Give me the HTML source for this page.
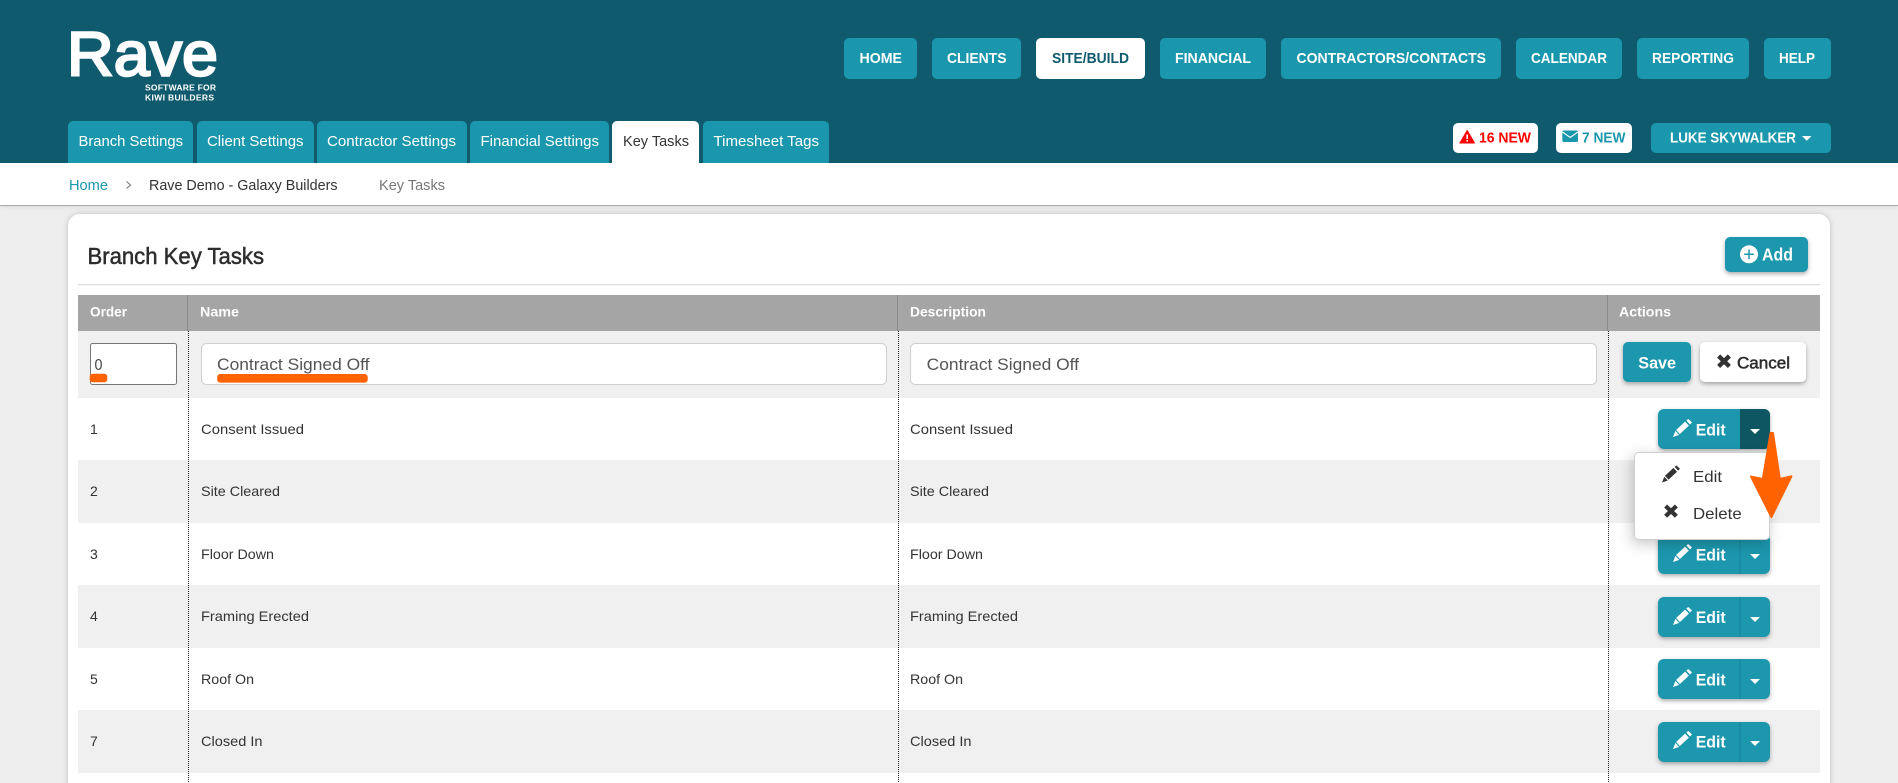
<!DOCTYPE html>
<html lang="en">
<head>
<meta charset="utf-8">
<title>Branch Key Tasks</title>
<style>
html,body{margin:0;padding:0;width:1898px;height:783px;overflow:hidden;background:#eee}
svg{display:block}
text{font-family:"Liberation Sans",sans-serif}
.b{font-weight:700}
.nav{font-size:15px;font-weight:700;fill:#fff}
.tab{font-size:15px;fill:#fff}
.cell{font-size:14px;fill:#333}
.th{font-size:14px;font-weight:700;fill:#fff}
.inp{font-size:17px;fill:#555}
.ed{font-size:17px;font-weight:700;fill:#fff}
.dd{font-size:16px;fill:#333}
</style>
</head>
<body>
<svg width="1898" height="783" viewBox="0 0 1898 783" xmlns="http://www.w3.org/2000/svg">
<defs>
<filter id="sh" x="-20%" y="-30%" width="140%" height="170%"><feDropShadow dx="0" dy="2" stdDeviation="2" flood-color="#000" flood-opacity=".32"/></filter>
<filter id="card" x="-2%" y="-5%" width="104%" height="110%"><feDropShadow dx="0" dy="0" stdDeviation="3" flood-color="#000" flood-opacity=".22"/></filter>
<filter id="menu" x="-30%" y="-30%" width="160%" height="170%"><feDropShadow dx="-2" dy="4" stdDeviation="7" flood-color="#000" flood-opacity=".22"/></filter>
<filter id="bar" x="-1%" y="-20%" width="102%" height="160%"><feDropShadow dx="0" dy="1" stdDeviation="3" flood-color="#000" flood-opacity=".12"/></filter>
<symbol id="pencil" viewBox="0 0 19 18"><path d="M13.3 1.5L15.2 0 19 3.4 17 5.5zM12.1 2.6L15.9 6.6 6.9 15 3.1 11zM2.4 11.9L6.2 15.9 0 18z"/></symbol>
</defs>

<!-- page chrome -->
<rect width="1898" height="783" fill="#eeeeee"/>
<rect y="163" width="1898" height="42" fill="#fff" filter="url(#bar)"/>
<rect y="205" width="1898" height="1" fill="#a9a9a9"/>
<rect width="1898" height="163" fill="#105a6e"/>

<!-- logo -->
<text x="67" y="75.5" font-size="62" fill="#fff" stroke="#fff" stroke-width="2.4" textLength="151" lengthAdjust="spacingAndGlyphs">Rave</text>
<text x="145" y="90.5" font-size="8.5" class="b" fill="#fff" textLength="71" lengthAdjust="spacing">SOFTWARE FOR</text>
<text x="145" y="100.5" font-size="8.5" class="b" fill="#fff" textLength="69" lengthAdjust="spacing">KIWI BUILDERS</text>

<!-- main nav -->
<g fill="#1b97ad">
<rect x="844" y="38" width="73" height="41" rx="5"/>
<rect x="932" y="38" width="89" height="41" rx="5"/>
<rect x="1036" y="38" width="109" height="41" rx="5" fill="#fff"/>
<rect x="1160" y="38" width="106" height="41" rx="5"/>
<rect x="1281" y="38" width="220" height="41" rx="5"/>
<rect x="1516" y="38" width="106" height="41" rx="5"/>
<rect x="1637" y="38" width="112" height="41" rx="5"/>
<rect x="1764" y="38" width="67" height="41" rx="5"/>
</g>
<text class="nav" x="859.5" y="63" textLength="42.5" lengthAdjust="spacingAndGlyphs">HOME</text>
<text class="nav" x="947" y="63" textLength="59.5" lengthAdjust="spacingAndGlyphs">CLIENTS</text>
<text class="nav" x="1052" y="63" textLength="77" lengthAdjust="spacingAndGlyphs" style="fill:#105a6e">SITE/BUILD</text>
<text class="nav" x="1175" y="63" textLength="76" lengthAdjust="spacingAndGlyphs">FINANCIAL</text>
<text class="nav" x="1296.5" y="63" textLength="189.5" lengthAdjust="spacingAndGlyphs">CONTRACTORS/CONTACTS</text>
<text class="nav" x="1531" y="63" textLength="76" lengthAdjust="spacingAndGlyphs">CALENDAR</text>
<text class="nav" x="1652" y="63" textLength="82" lengthAdjust="spacingAndGlyphs">REPORTING</text>
<text class="nav" x="1779" y="63" textLength="36" lengthAdjust="spacingAndGlyphs">HELP</text>

<!-- tabs -->
<g fill="#1b97ad">
<path d="M68 163v-37a5 5 0 0 1 5-5h115a5 5 0 0 1 5 5v37z"/>
<path d="M197 163v-37a5 5 0 0 1 5-5h107a5 5 0 0 1 5 5v37z"/>
<path d="M317 163v-37a5 5 0 0 1 5-5h140a5 5 0 0 1 5 5v37z"/>
<path d="M470 163v-37a5 5 0 0 1 5-5h129a5 5 0 0 1 5 5v37z"/>
<path d="M612 163v-37a5 5 0 0 1 5-5h77a5 5 0 0 1 5 5v37z" fill="#fff"/>
<path d="M703 163v-37a5 5 0 0 1 5-5h116a5 5 0 0 1 5 5v37z"/>
</g>
<text class="tab" x="78.5" y="146" textLength="104.5" lengthAdjust="spacingAndGlyphs">Branch Settings</text>
<text class="tab" x="207" y="146" textLength="96.5" lengthAdjust="spacingAndGlyphs">Client Settings</text>
<text class="tab" x="327" y="146" textLength="129" lengthAdjust="spacingAndGlyphs">Contractor Settings</text>
<text class="tab" x="480.5" y="146" textLength="118.5" lengthAdjust="spacingAndGlyphs">Financial Settings</text>
<text class="tab" x="623" y="146" textLength="66" lengthAdjust="spacingAndGlyphs" style="fill:#333">Key Tasks</text>
<text class="tab" x="713.5" y="146" textLength="105.5" lengthAdjust="spacingAndGlyphs">Timesheet Tags</text>

<!-- badges -->
<rect x="1453" y="123" width="85" height="30" rx="5" fill="#fff"/>
<path d="M1467.2 130.5l7.3 12.5h-14.6z" fill="#f00" stroke="#f00" stroke-width="1" stroke-linejoin="round"/>
<rect x="1466.4" y="134.5" width="1.6" height="4.5" fill="#fff"/><rect x="1466.4" y="140" width="1.6" height="1.6" fill="#fff"/>
<text x="1479" y="142.3" font-size="14.5" class="b" fill="#f00" textLength="52" lengthAdjust="spacingAndGlyphs">16 NEW</text>
<rect x="1556" y="123" width="76" height="30" rx="5" fill="#fff"/>
<rect x="1562.3" y="130.5" width="15.7" height="11.5" rx="1.5" fill="#1b97ad"/>
<path d="M1562.5 132l7.7 5.5 7.7-5.5" fill="none" stroke="#fff" stroke-width="1.1"/>
<text x="1582" y="142.3" font-size="14.5" class="b" fill="#1b97ad" textLength="43.5" lengthAdjust="spacingAndGlyphs">7 NEW</text>
<rect x="1651" y="123" width="180" height="30" rx="5" fill="#1b97ad"/>
<text x="1670" y="142.3" font-size="14.5" class="b" fill="#fff" textLength="126" lengthAdjust="spacingAndGlyphs">LUKE SKYWALKER</text>
<path d="M1802 136h9.5l-4.75 4.8z" fill="#fff"/>

<!-- breadcrumb -->
<text x="69" y="190" font-size="14.5" fill="#1b97ad" textLength="39" lengthAdjust="spacingAndGlyphs">Home</text>
<path d="M126.5 181.5l4 3.5-4 3.5" fill="none" stroke="#777" stroke-width="1.1"/>
<text x="149" y="190" font-size="14.5" fill="#333" textLength="188.5" lengthAdjust="spacingAndGlyphs">Rave Demo - Galaxy Builders</text>
<text x="379" y="190" font-size="14.5" fill="#777" textLength="66" lengthAdjust="spacingAndGlyphs">Key Tasks</text>

<!-- card -->
<path d="M68 800V226a12 12 0 0 1 12-12h1738a12 12 0 0 1 12 12v574z" fill="#fff" filter="url(#card)"/>
<text x="87.5" y="264" font-size="23" fill="#2d2d2d" stroke="#2d2d2d" stroke-width=".5" textLength="176.5" lengthAdjust="spacingAndGlyphs">Branch Key Tasks</text>
<rect x="78" y="284" width="1742" height="1.3" fill="#dedede"/>

<!-- Add -->
<rect x="1725" y="237" width="83" height="35" rx="5" fill="#1b97ad" filter="url(#sh)"/>
<circle cx="1749" cy="254.3" r="9" fill="#fff"/>
<path d="M1749 249.5v9.6M1744.2 254.3h9.6" stroke="#1b97ad" stroke-width="1.5"/>
<text x="1762" y="260.7" font-size="17.5" class="b" fill="#fff" textLength="31" lengthAdjust="spacingAndGlyphs">Add</text>

<!-- table header -->
<rect x="78" y="295" width="1742" height="36" fill="#a5a5a5"/>
<rect x="187" y="295" width="1" height="36" fill="#8b8b8b"/>
<rect x="897" y="295" width="1" height="36" fill="#8b8b8b"/>
<rect x="1607" y="295" width="1" height="36" fill="#8b8b8b"/>
<text class="th" x="90" y="316.5" textLength="37" lengthAdjust="spacingAndGlyphs">Order</text>
<text class="th" x="200" y="316.5" textLength="39" lengthAdjust="spacingAndGlyphs">Name</text>
<text class="th" x="910" y="316.5" textLength="76" lengthAdjust="spacingAndGlyphs">Description</text>
<text class="th" x="1619" y="316.5" textLength="52" lengthAdjust="spacingAndGlyphs">Actions</text>

<!-- rows -->
<g fill="#f0f0f0">
<rect x="78" y="331" width="1742" height="67"/>
<rect x="78" y="460" width="1742" height="63"/>
<rect x="78" y="585" width="1742" height="63"/>
<rect x="78" y="710" width="1742" height="63"/>
</g>
<g stroke="#222" stroke-width="1" stroke-dasharray="1 1" shape-rendering="crispEdges">
<path d="M188.5 331V783M898.5 331V783M1608.5 331V783"/>
</g>

<!-- edit row -->
<rect x="90.5" y="343.5" width="86" height="41" rx="2" fill="#fff" stroke="#767676"/>
<text x="94.5" y="370" font-size="16" fill="#444" textLength="8" lengthAdjust="spacingAndGlyphs">0</text>
<rect x="201.5" y="343.5" width="685" height="41" rx="5" fill="#fff" stroke="#cfcfcf"/>
<text class="inp" x="217" y="370" textLength="152.5" lengthAdjust="spacingAndGlyphs">Contract Signed Off</text>
<rect x="910.5" y="343.5" width="686" height="41" rx="5" fill="#fff" stroke="#cfcfcf"/>
<text class="inp" x="926.7" y="370" textLength="152.3" lengthAdjust="spacingAndGlyphs">Contract Signed Off</text>
<rect x="89.7" y="373.7" width="17.6" height="8.6" rx="3" fill="#ff6200"/>
<rect x="217.2" y="374" width="150.5" height="8.6" rx="3" fill="#ff6200"/>

<rect x="1623" y="342" width="68" height="40" rx="5" fill="#1b97ad" filter="url(#sh)"/>
<text x="1638.3" y="368.3" font-size="17" class="b" fill="#fff" textLength="37.7" lengthAdjust="spacingAndGlyphs">Save</text>
<rect x="1700" y="342" width="106" height="40" rx="5" fill="#fff" filter="url(#sh)"/>
<path d="M1718.6 356l10.8 10.4M1729.4 356l-10.8 10.4" stroke="#333" stroke-width="4.4"/>
<text x="1737" y="368.3" font-size="17" fill="#2d2d2d" stroke="#2d2d2d" stroke-width=".55" textLength="53" lengthAdjust="spacingAndGlyphs">Cancel</text>

<!-- cell text -->
<g class="cell">
<text class="cell" x="90" y="434">1</text>
<text class="cell" x="201" y="434" textLength="103" lengthAdjust="spacingAndGlyphs">Consent Issued</text>
<text class="cell" x="910" y="434" textLength="103" lengthAdjust="spacingAndGlyphs">Consent Issued</text>
<text class="cell" x="90" y="496">2</text>
<text class="cell" x="201" y="496" textLength="79" lengthAdjust="spacingAndGlyphs">Site Cleared</text>
<text class="cell" x="910" y="496" textLength="79" lengthAdjust="spacingAndGlyphs">Site Cleared</text>
<text class="cell" x="90" y="559">3</text>
<text class="cell" x="201" y="559" textLength="73" lengthAdjust="spacingAndGlyphs">Floor Down</text>
<text class="cell" x="910" y="559" textLength="73" lengthAdjust="spacingAndGlyphs">Floor Down</text>
<text class="cell" x="90" y="621">4</text>
<text class="cell" x="201" y="621" textLength="108" lengthAdjust="spacingAndGlyphs">Framing Erected</text>
<text class="cell" x="910" y="621" textLength="108" lengthAdjust="spacingAndGlyphs">Framing Erected</text>
<text class="cell" x="90" y="684">5</text>
<text class="cell" x="201" y="684" textLength="53" lengthAdjust="spacingAndGlyphs">Roof On</text>
<text class="cell" x="910" y="684" textLength="53" lengthAdjust="spacingAndGlyphs">Roof On</text>
<text class="cell" x="90" y="746">7</text>
<text class="cell" x="201" y="746" textLength="61.5" lengthAdjust="spacingAndGlyphs">Closed In</text>
<text class="cell" x="910" y="746" textLength="61.5" lengthAdjust="spacingAndGlyphs">Closed In</text>
</g>

<!-- row buttons -->
<g id="rowbtns">
<!-- row 1 (open) -->
<rect x="1658" y="409" width="112" height="40" rx="6" fill="#1b97ad" filter="url(#sh)"/>
<path d="M1740 409h24a6 6 0 0 1 6 6v28a6 6 0 0 1-6 6h-24z" fill="#0f5663"/>
<use href="#pencil" x="1673" y="419" width="19" height="18" fill="#fff"/>
<text class="ed" x="1695.7" y="435.5" textLength="30" lengthAdjust="spacingAndGlyphs">Edit</text>
<path d="M1750 429h10l-5 5z" fill="#fff"/>

<!-- row 3 -->
<rect x="1658" y="534" width="112" height="40" rx="6" fill="#1b97ad" filter="url(#sh)"/>
<rect x="1739.5" y="534" width="1" height="40" fill="#168598"/>
<use href="#pencil" x="1673" y="544" width="19" height="18" fill="#fff"/>
<text class="ed" x="1695.7" y="560.5" textLength="30" lengthAdjust="spacingAndGlyphs">Edit</text>
<path d="M1750 554h10l-5 5z" fill="#fff"/>

<!-- row 4 -->
<rect x="1658" y="597" width="112" height="40" rx="6" fill="#1b97ad" filter="url(#sh)"/>
<rect x="1739.5" y="597" width="1" height="40" fill="#168598"/>
<use href="#pencil" x="1673" y="607" width="19" height="18" fill="#fff"/>
<text class="ed" x="1695.7" y="623" textLength="30" lengthAdjust="spacingAndGlyphs">Edit</text>
<path d="M1750 617h10l-5 5z" fill="#fff"/>

<!-- row 5 -->
<rect x="1658" y="659" width="112" height="40" rx="6" fill="#1b97ad" filter="url(#sh)"/>
<rect x="1739.5" y="659" width="1" height="40" fill="#168598"/>
<use href="#pencil" x="1673" y="669" width="19" height="18" fill="#fff"/>
<text class="ed" x="1695.7" y="685.5" textLength="30" lengthAdjust="spacingAndGlyphs">Edit</text>
<path d="M1750 679h10l-5 5z" fill="#fff"/>

<!-- row 7 -->
<rect x="1658" y="722" width="112" height="40" rx="6" fill="#1b97ad" filter="url(#sh)"/>
<rect x="1739.5" y="722" width="1" height="40" fill="#168598"/>
<use href="#pencil" x="1673" y="731" width="19" height="18" fill="#fff"/>
<text class="ed" x="1695.7" y="747.7" textLength="30" lengthAdjust="spacingAndGlyphs">Edit</text>
<path d="M1750 741h10l-5 5z" fill="#fff"/>
</g>

<!-- dropdown -->
<rect x="1634.5" y="452.5" width="135" height="87" rx="4" fill="#fff" stroke="#cfcfcf" filter="url(#menu)"/>
<use href="#pencil" x="1662" y="465" width="18" height="18" fill="#333"/>
<text class="dd" x="1693" y="482" textLength="29" lengthAdjust="spacingAndGlyphs">Edit</text>
<path d="M1665.6 506l10.8 10.2M1676.4 506l-10.8 10.2" stroke="#333" stroke-width="4.2"/>
<text class="dd" x="1693" y="519" textLength="48.7" lengthAdjust="spacingAndGlyphs">Delete</text>

<!-- orange arrow -->
<path d="M1770.5 433h2.5l6.8 46 11.6-2.6-20 40.6-20.4-40.4 11.8 2.4z" fill="#ff6200" stroke="#ff6200" stroke-width="2" stroke-linejoin="round"/>
</svg>
</body>
</html>
